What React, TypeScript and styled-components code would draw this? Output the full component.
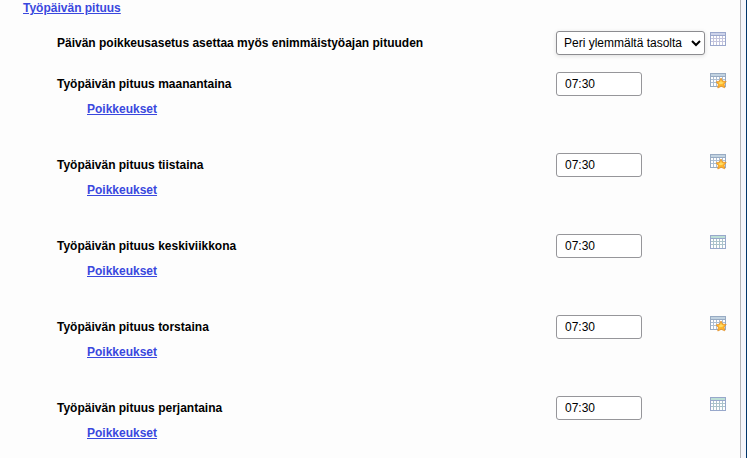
import React from 'react';
import styled, { createGlobalStyle } from 'styled-components';

const GlobalStyle = createGlobalStyle`
  * { box-sizing: border-box; }
  body {
    margin: 0;
    background: #ffffff;
    overflow: hidden;
    font-family: "Liberation Sans", Arial, sans-serif;
    font-size: 12px;
    color: #000000;
  }
`;

const Page = styled.div`
  display: flex;
  width: 747px;
  height: 458px;
  overflow: hidden;
  background: #f5f6fb;
  border-right: 1px solid #01366b;
`;

const Panel = styled.main`
  width: 741px;
  background: #fdfdfd;
  border-right: 1px solid #b4b4b6;
`;

const Link = styled.a`
  color: #3a48de;
  font-weight: bold;
  line-height: 16px;
  text-decoration: underline;
`;

const Heading = styled.div`
  display: flex;
  height: 31px;
  padding-left: 23px;
`;

const Setting = styled.div<{ $height: number }>`
  display: grid;
  grid-template-columns: 499px 154px 16px;
  align-content: start;
  height: ${(p) => p.$height}px;
  padding-left: 57px;
`;

const Label = styled.label`
  font-weight: bold;
  line-height: 24px;
`;

const Exceptions = styled.div`
  display: flex;
  padding: 5px 0 0 30px;
`;

const TimeInput = styled.input`
  width: 86px;
  height: 24px;
  padding: 0 8px;
  border: 1px solid #96969a;
  border-radius: 3px;
  background: #ffffff;
  color: #000000;
  font: 12px "Liberation Sans", Arial, sans-serif;
  outline: none;
`;

const Select = styled.select`
  width: 149px;
  height: 24px;
  padding: 0 0 0 3px;
  border: 1px solid #8c8c90;
  border-radius: 3px;
  background: #ffffff;
  box-shadow: 0 1px 4px rgba(0, 0, 0, 0.13);
  color: #000000;
  font: 12px "Liberation Sans", Arial, sans-serif;
  outline: none;
`;

const Icon = styled.svg`
  display: block;
  width: 17px;
  height: 17px;
  margin-top: 1px;
`;

type IconKind = 'plain' | 'green' | 'star';

const palette: Record<IconKind, { header: string; frame: string; line: string }> = {
  plain: { header: '#cdd3ea', frame: '#9aa7cc', line: '#c3c4dd' },
  green: { header: '#bde0d6', frame: '#98a8cb', line: '#abc3cb' },
  star: { header: '#c2d3e1', frame: '#98abc3', line: '#aebfd2' },
};

function CalendarIcon({ kind }: { kind: IconKind }) {
  const { header, frame, line } = palette[kind];
  return (
    <Icon viewBox="0 0 17 17" shapeRendering="crispEdges" aria-hidden="true">
      <rect x="0.5" y="0.5" width="15" height="13" fill="#ffffff" stroke={frame} />
      <rect x="1" y="1" width="14" height="2" fill={header} />
      <rect x="1" y="3" width="14" height="1" fill={frame} />
      <path d="M3.5 4v9M6.5 4v9M9.5 4v9M12.5 4v9M1 6.5h14M1 9.5h14" stroke={line} />
      {kind === 'star' && (
        <g shapeRendering="auto">
          <path
            d="M11 5L12.6 8.1L16.2 8.5L14 11L14.8 14.8L11.2 13.3L7.8 15L8.3 11.3L6.1 8.9L9.5 8.2Z"
            fill="#ffb52a"
            stroke="#e2922f"
            strokeWidth="0.8"
            strokeLinejoin="round"
          />
          <path d="M10.9 6.8L11.8 9.1L14 9.4L12 11L9.8 11.3L8.4 9.4L10.2 9Z" fill="#ffdc64" />
        </g>
      )}
    </Icon>
  );
}

const days: { id: string; name: string; icon: IconKind }[] = [
  { id: 'ma', name: 'maanantaina', icon: 'star' },
  { id: 'ti', name: 'tiistaina', icon: 'star' },
  { id: 'ke', name: 'keskiviikkona', icon: 'green' },
  { id: 'to', name: 'torstaina', icon: 'star' },
  { id: 'pe', name: 'perjantaina', icon: 'green' },
];

export default function App() {
  return (
    <>
      <GlobalStyle />
      <Page>
        <Panel>
          <Heading>
            <Link href="#">Työpäivän pituus</Link>
          </Heading>
          <Setting $height={41}>
            <Label htmlFor="max">Päivän poikkeusasetus asettaa myös enimmäistyöajan pituuden</Label>
            <Select id="max">
              <option>Peri ylemmältä tasolta</option>
            </Select>
            <CalendarIcon kind="plain" />
          </Setting>
          {days.map((day) => (
            <Setting key={day.id} $height={81}>
              <Label htmlFor={day.id}>Työpäivän pituus {day.name}</Label>
              <TimeInput id={day.id} defaultValue="07:30" />
              <CalendarIcon kind={day.icon} />
              <Exceptions>
                <Link href="#">Poikkeukset</Link>
              </Exceptions>
            </Setting>
          ))}
        </Panel>
      </Page>
    </>
  );
}
